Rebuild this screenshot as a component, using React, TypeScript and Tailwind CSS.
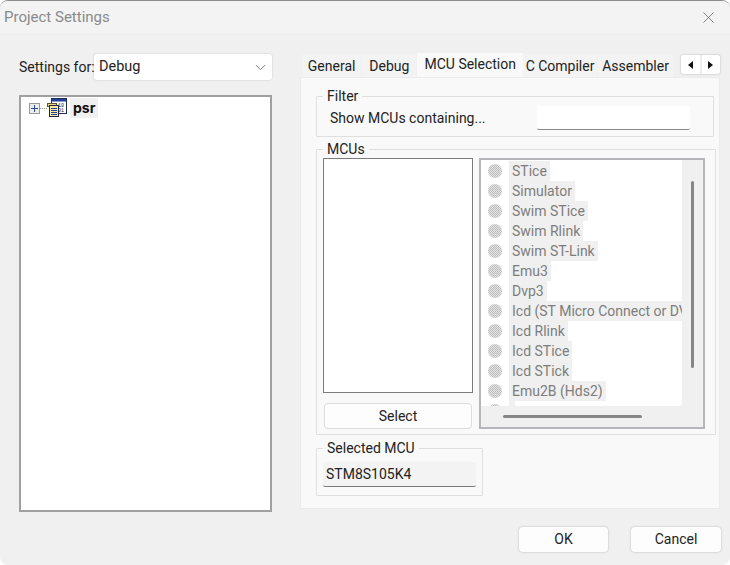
import React from 'react';
import { ChevronDown, X } from 'lucide-react';

const TABS = ['General', 'Debug', 'MCU Selection', 'C Compiler', 'Assembler'];
const TAB_WIDTHS = ['w-[60px]', 'w-[55px]', 'w-[107px]', 'w-[75px]', 'w-[76px]'];

const DEBUGGERS = [
  'STice',
  'Simulator',
  'Swim STice',
  'Swim Rlink',
  'Swim ST-Link',
  'Emu3',
  'Dvp3',
  'Icd (ST Micro Connect or DVD)',
  'Icd Rlink',
  'Icd STice',
  'Icd STick',
  'Emu2B (Hds2)',
  '',
];

const groupBox = 'border border-[#dfdfdf] rounded-[1px]';
const legend = 'ml-[6px] px-[4px] leading-[17px] text-[#222]';

const RadioDot = ({ id }: { id: number }) => (
  <svg width="16" height="16" viewBox="0 0 16 16" className="shrink-0">
    <defs>
      <pattern id={`dither${id}`} width="2" height="2" patternUnits="userSpaceOnUse">
        <rect width="2" height="2" fill="#e4e4e4" />
        <rect width="1" height="1" fill="#bdbdbd" />
        <rect x="1" y="1" width="1" height="1" fill="#bdbdbd" />
      </pattern>
    </defs>
    <circle cx="8" cy="8" r="7" fill={`url(#dither${id})`} />
  </svg>
);

const ProjectIcon = () => (
  <svg width="20" height="20" viewBox="0 0 20 20" className="shrink-0">
    <rect x="4.5" y="0.5" width="15" height="15" fill="#fff" stroke="#1c2c56" />
    <rect x="5" y="1" width="14" height="2.5" fill="#23409a" />
    <text x="11" y="8.5" fontSize="5" fontFamily="Liberation Mono, monospace" fill="#222">10</text>
    <text x="11" y="14" fontSize="5" fontFamily="Liberation Mono, monospace" fill="#222">01</text>
    <rect x="0.5" y="5.5" width="9" height="3" fill="#e8d77a" stroke="#5c5630" />
    <rect x="2.5" y="7.5" width="9" height="11" fill="#f3e9a8" stroke="#23264a" />
    <path d="M4 10.5h6M4 12.5h6M4 14.5h6M4 16.5h6" stroke="#23409a" strokeWidth="1" />
  </svg>
);

const TabArrows = () => (
  <div className="ml-[7px] mt-[2px] flex h-[19px] w-[39px] rounded-[2px] bg-white shadow-[0_0_2px_rgba(0,0,0,0.3)]">
    <div className="flex flex-1 items-center justify-center border-r-2 border-[#ededed]">
      <svg width="5" height="8" viewBox="0 0 5 8"><path d="M5 0v8L0 4z" fill="#111" /></svg>
    </div>
    <div className="flex flex-1 items-center justify-center">
      <svg width="5" height="8" viewBox="0 0 5 8"><path d="M0 0v8l5-4z" fill="#111" /></svg>
    </div>
  </div>
);

const App = () => {
  return (
    <div className="relative flex h-[565px] w-[730px] flex-col overflow-hidden rounded-[8px] border-t border-[#8c8c8c] bg-[#f0f0f0] font-['Roboto','Open_Sans',sans-serif] text-[14px] text-[#222]">

      {/* Title bar */}
      <div className="flex h-[32px] shrink-0 items-center justify-between bg-[#f3f3f3] pl-[4px] pr-[12px]">
        <span className="text-[15px] text-[#8a8a8a]">Project Settings</span>
        <X size={19} strokeWidth={1} className="text-[#666]" />
      </div>

      <div className="flex flex-1">

        {/* Left side: config picker and project tree */}
        <div className="ml-[19px] mt-[21px] flex w-[253px] flex-col">
          <div className="flex h-[26px] items-center">
            <span className="w-[75px] whitespace-nowrap">Settings for:</span>
            <div className="flex h-[26px] flex-1 items-center justify-between rounded-[3px] bg-white pl-[5px] pr-[3px] shadow-[0_0_2px_rgba(0,0,0,0.2)]">
              <span className="text-[14.5px]">Debug</span>
              <ChevronDown size={17} strokeWidth={1.25} className="text-[#666]" />
            </div>
          </div>
          <div className="mt-[15px] h-[417px] border-2 border-[#a0a0a0] bg-white pl-[8px] pt-[1px]">
            <div className="flex items-center">
              <div className="flex h-[11px] w-[11px] items-center justify-center border border-[#9a9a9a] bg-[#ececec]">
                <svg width="7" height="7" viewBox="0 0 7 7"><path d="M0 3.5h7M3.5 0v7" stroke="#2a4a9a" /></svg>
              </div>
              <div className="w-[7px] border-t border-dotted border-[#999]" />
              <ProjectIcon />
              <span className="ml-[3px] bg-[#f0f0f0] px-[3px] font-['Inter',sans-serif] text-[14px] font-bold leading-[20px] text-[#111]">psr</span>
            </div>
          </div>
        </div>

        {/* Right side: tabbed pages */}
        <div className="ml-[28px] mt-[20px] flex w-[420px] flex-col">
          <div className="flex h-[24px] items-end pl-[2px]">
            {TABS.map((tab, i) => (
              <div
                key={tab}
                className={`${TAB_WIDTHS[i]} flex items-center justify-center whitespace-nowrap ${
                  tab === 'MCU Selection'
                    ? 'h-[24px] bg-[#f9f9f9] pb-[1px]'
                    : 'mr-px h-[23px] bg-[#f3f3f3] pt-[1px]'
                }`}
              >
                {tab}
              </div>
            ))}
            <div className="mb-auto"><TabArrows /></div>
          </div>

          <div className="h-[432px] border border-[#ebebeb] bg-[#f9f9f9] pl-[15px] pr-[5px]">
            <fieldset className={`${groupBox} mt-[10px] h-[49px] w-[398px]`}>
              <legend className={legend}>Filter</legend>
              <div className="mt-px flex items-center">
                <span className="ml-[13px] w-[207px] whitespace-nowrap">Show MCUs containing...</span>
                <div className="h-[24px] w-[153px] rounded-[2px] border-b border-[#8a8a8a] bg-white" />
              </div>
            </fieldset>

            <fieldset className={`${groupBox} mt-[4px] h-[294px] w-[400px]`}>
              <legend className={legend}>MCUs</legend>
              <div className="ml-[6px] flex">
                <div className="flex w-[150px] flex-col">
                  <div className="h-[235px] border border-[#7b7b7b] bg-white" />
                  <button className="mx-px mt-[10px] h-[26px] rounded-[4px] border border-[#dcdcdc] bg-[#fdfdfd]">Select</button>
                </div>
                <div className="ml-[6px] flex h-[271px] w-[226px] flex-col border-2 border-[#b4b6ba] bg-[#f0f0f0]">
                  <div className="flex h-[246px]">
                    <div className="w-[201px] overflow-hidden rounded-br-[3px] bg-white pl-[6px] pt-[1px]">
                      {DEBUGGERS.map((name, i) => (
                        <div key={i} className="flex h-[20px] items-center whitespace-nowrap">
                          <RadioDot id={i} />
                          <span className="ml-[6px] flex h-[20px] max-w-[173px] items-center overflow-hidden bg-[#f0f0f0] px-[3px] text-[#7d7d7d]">{name}</span>
                        </div>
                      ))}
                    </div>
                    <div className="flex flex-1 justify-center pt-[21px]">
                      <div className="h-[187px] w-[3px] rounded-full bg-[#868686]" />
                    </div>
                  </div>
                  <div className="flex flex-1 items-center pl-[22px]">
                    <div className="h-[3px] w-[139px] rounded-full bg-[#868686]" />
                  </div>
                </div>
              </div>
            </fieldset>

            <fieldset className={`${groupBox} mt-[5px] h-[56px] w-[167px]`}>
              <legend className={legend}>Selected MCU</legend>
              <div className="ml-[6px] mt-[5px] flex h-[25px] w-[153px] items-center rounded-[2px] border-b border-[#7a7a7a] bg-[#f3f3f3] pl-[3px]">STM8S105K4</div>
            </fieldset>
          </div>
        </div>
      </div>

      {/* Footer buttons */}
      <div className="flex h-[55px] shrink-0 justify-end gap-[23px] pr-[9px] pt-[15px]">
        <button className="h-[25px] w-[89px] rounded-[4px] bg-[#fdfdfd] shadow-[0_0_2px_rgba(0,0,0,0.3)]">OK</button>
        <button className="h-[25px] w-[90px] rounded-[4px] bg-[#fdfdfd] shadow-[0_0_2px_rgba(0,0,0,0.3)]">Cancel</button>
      </div>
    </div>
  );
};

export default App;
